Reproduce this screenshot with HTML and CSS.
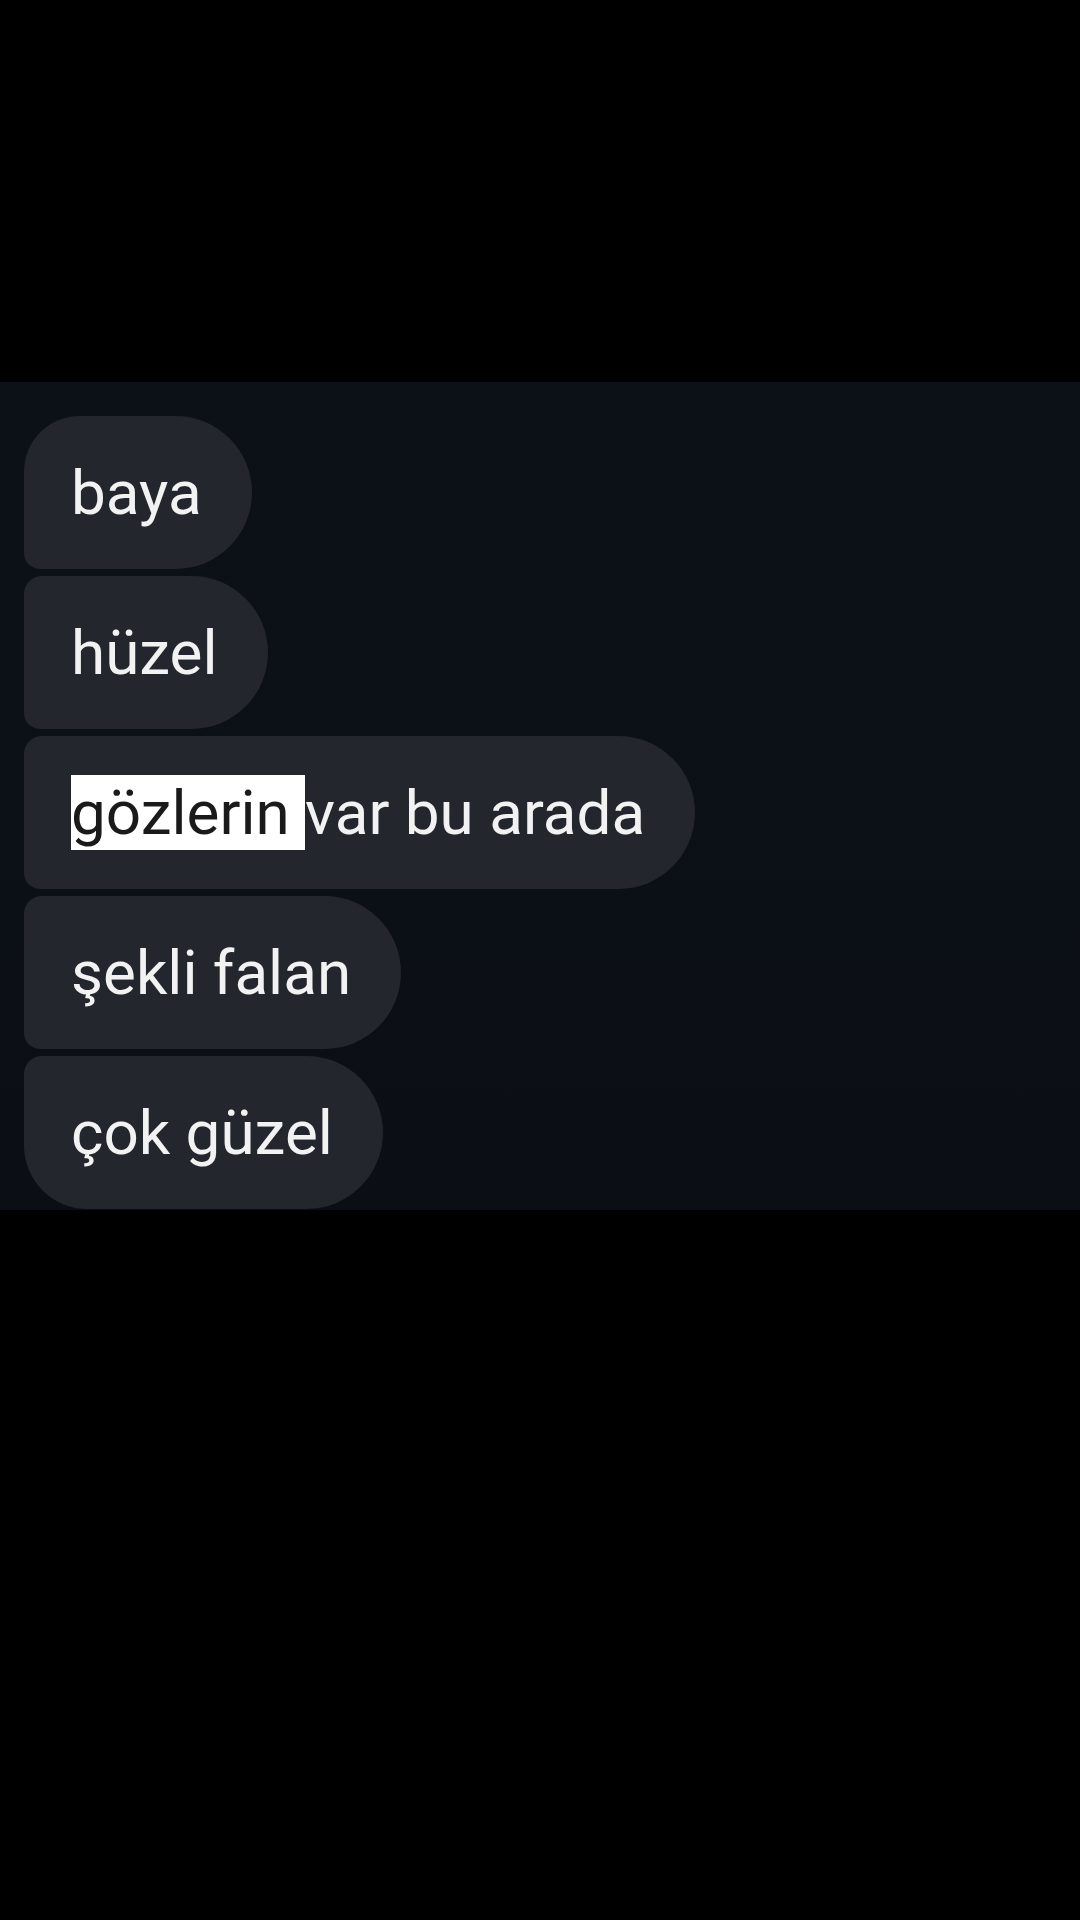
FILE: index.html
```html
<!DOCTYPE html>
<html lang="tr">
<head>
<meta charset="utf-8">
<title>Chat</title>
<link rel="stylesheet" href="styles.css">
</head>
<body>
<div class="screen">
  <div class="top-black"></div>
  <div class="chat">
    <div class="bubble first">baya</div>
    <div class="bubble">hüzel</div>
    <div class="bubble"><span class="hl">gözlerin </span>var bu arada</div>
    <div class="bubble">şekli falan</div>
    <div class="bubble last">çok güzel</div>
  </div>
  <div class="bottom-black"></div>
</div>
</body>
</html>
```

FILE: styles.css
```css
html, body {
  margin: 0;
  padding: 0;
  background: #000;
}
.screen {
  width: 1080px;
  height: 1920px;
  display: flex;
  flex-direction: column;
  background: #000;
  overflow: hidden;
}
.top-black {
  height: 382px;
  flex: none;
}
.chat {
  height: 828px;
  flex: none;
  background: linear-gradient(180deg, #0c1118 0%, #0b0f15 100%);
  padding: 34px 0 0 24px;
  box-sizing: border-box;
  display: flex;
  flex-direction: column;
  align-items: flex-start;
  gap: 7px;
  overflow: hidden;
}
.bubble {
  height: 153px;
  flex: none;
  box-sizing: border-box;
  display: flex;
  align-items: center;
  padding: 0 50px 0 47px;
  background: #23262c;
  color: #f2f2f2;
  font-family: Roboto, "Liberation Sans", Arial, sans-serif;
  font-size: 62px;
  white-space: pre;
  border-radius: 18px 77px 77px 16px;
}
.bubble.first {
  border-top-left-radius: 56px;
}
.bubble.last {
  border-bottom-left-radius: 64px;
}
.hl {
  background: #ffffff;
  color: #1a1a1a;
  line-height: 75px;
}
.bottom-black {
  flex: 1;
}
```
